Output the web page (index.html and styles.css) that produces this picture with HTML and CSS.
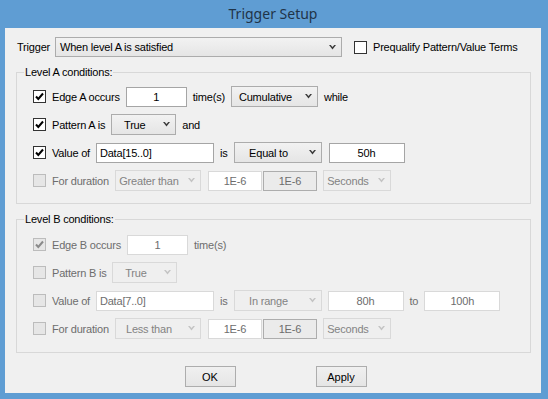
FILE: index.html
```html
<!DOCTYPE html>
<html>
<head>
  <meta charset="utf-8">
  <title>Trigger Setup</title>
  <link rel="stylesheet" href="styles.css">
</head>
<body>
  <div class="window">
    <div class="titlebar">Trigger Setup</div>
    <div class="dialog">
      <div class="top-row">
        <span class="trigger-lbl">Trigger</span>
        <div class="combo wide">
          <span class="combo-text">When level A is satisfied</span>
          <svg width="7" height="5" viewBox="0 0 7 5"><polygon points="0,0 1.8,0 3.5,2 5.2,0 7,0 3.5,4.5"/></svg>
        </div>
        <label class="opt prequal"><span class="box"></span>Prequalify Pattern/Value Terms</label>
      </div>

      <fieldset class="group">
        <legend>Level A conditions:</legend>
        <div class="group-body">
          <div class="row">
            <label class="opt"><span class="box"><svg width="11" height="11" viewBox="0 0 11 11"><polyline points="2,5.5 4.3,8 9,2.5"/></svg></span>Edge A occurs</label>
            <div class="field w-count">1</div>
            <span>time(s)</span>
            <div class="combo w-mode">
              <span class="combo-text">Cumulative</span>
              <svg width="7" height="5" viewBox="0 0 7 5"><polygon points="0,0 1.8,0 3.5,2 5.2,0 7,0 3.5,4.5"/></svg>
            </div>
            <span>while</span>
          </div>
          <div class="row">
            <label class="opt"><span class="box"><svg width="11" height="11" viewBox="0 0 11 11"><polyline points="2,5.5 4.3,8 9,2.5"/></svg></span>Pattern A is</label>
            <div class="combo w-bool">
              <span class="combo-text">True</span>
              <svg width="7" height="5" viewBox="0 0 7 5"><polygon points="0,0 1.8,0 3.5,2 5.2,0 7,0 3.5,4.5"/></svg>
            </div>
            <span>and</span>
          </div>
          <div class="row">
            <label class="opt"><span class="box"><svg width="11" height="11" viewBox="0 0 11 11"><polyline points="2,5.5 4.3,8 9,2.5"/></svg></span>Value of</label>
            <div class="field left w-data">Data[15..0]</div>
            <span>is</span>
            <div class="combo w-op">
              <span class="combo-text">Equal to</span>
              <svg width="7" height="5" viewBox="0 0 7 5"><polygon points="0,0 1.8,0 3.5,2 5.2,0 7,0 3.5,4.5"/></svg>
            </div>
            <div class="field w-val spaced">50h</div>
          </div>
          <div class="row off">
            <label class="opt"><span class="box"></span>For duration</label>
            <div class="combo w-cmp">
              <span class="combo-text">Greater than</span>
              <svg width="7" height="5" viewBox="0 0 7 5"><polygon points="0,0 1.8,0 3.5,2 5.2,0 7,0 3.5,4.5"/></svg>
            </div>
            <div class="field w-time spaced">1E-6</div>
            <div class="field readonly w-time joined">1E-6</div>
            <div class="combo w-unit">
              <span class="combo-text">Seconds</span>
              <svg width="7" height="5" viewBox="0 0 7 5"><polygon points="0,0 1.8,0 3.5,2 5.2,0 7,0 3.5,4.5"/></svg>
            </div>
          </div>
        </div>
      </fieldset>

      <fieldset class="group group-b">
        <legend>Level B conditions:</legend>
        <div class="group-body">
          <div class="row off">
            <label class="opt"><span class="box"><svg width="11" height="11" viewBox="0 0 11 11"><polyline points="2,5.5 4.3,8 9,2.5"/></svg></span>Edge B occurs</label>
            <div class="field w-count">1</div>
            <span>time(s)</span>
          </div>
          <div class="row off">
            <label class="opt"><span class="box"></span>Pattern B is</label>
            <div class="combo w-bool">
              <span class="combo-text">True</span>
              <svg width="7" height="5" viewBox="0 0 7 5"><polygon points="0,0 1.8,0 3.5,2 5.2,0 7,0 3.5,4.5"/></svg>
            </div>
          </div>
          <div class="row off">
            <label class="opt"><span class="box"></span>Value of</label>
            <div class="field left w-data">Data[7..0]</div>
            <span>is</span>
            <div class="combo w-op">
              <span class="combo-text">In range</span>
              <svg width="7" height="5" viewBox="0 0 7 5"><polygon points="0,0 1.8,0 3.5,2 5.2,0 7,0 3.5,4.5"/></svg>
            </div>
            <div class="field w-val">80h</div>
            <span>to</span>
            <div class="field w-val">100h</div>
          </div>
          <div class="row off">
            <label class="opt"><span class="box"></span>For duration</label>
            <div class="combo w-cmp">
              <span class="combo-text">Less than</span>
              <svg width="7" height="5" viewBox="0 0 7 5"><polygon points="0,0 1.8,0 3.5,2 5.2,0 7,0 3.5,4.5"/></svg>
            </div>
            <div class="field w-time spaced">1E-6</div>
            <div class="field readonly w-time joined">1E-6</div>
            <div class="combo w-unit">
              <span class="combo-text">Seconds</span>
              <svg width="7" height="5" viewBox="0 0 7 5"><polygon points="0,0 1.8,0 3.5,2 5.2,0 7,0 3.5,4.5"/></svg>
            </div>
          </div>
        </div>
      </fieldset>

      <div class="buttons">
        <button>OK</button>
        <button>Apply</button>
      </div>
    </div>
  </div>
</body>
</html>
```

FILE: styles.css
```css
* {
  box-sizing: border-box;
}
body {
  margin: 0;
  font-family: 'Liberation Sans', Arial, sans-serif;
  font-size: 11px;
  letter-spacing: -0.2px;
  color: #000;
  background: #5f9dd3;
}
.window {
  width: 548px;
  height: 399px;
  padding: 0 7px 6px 5px;
  display: flex;
  flex-direction: column;
}
.titlebar {
  height: 28px;
  line-height: 28px;
  text-align: center;
  font-family: 'Noto Sans', 'Open Sans', sans-serif;
  font-size: 14px;
  letter-spacing: 0;
  color: #1f3449;
}
.dialog {
  flex: 1;
  background: #f0f0f0;
  padding: 9px 10px 0 11px;
}
.top-row {
  display: flex;
  align-items: center;
  height: 20px;
  padding-left: 1px;
}
.trigger-lbl {
  width: 38px;
}
.prequal {
  margin-left: 12px;
  gap: 4px;
}

/* group boxes */
.group {
  margin: 9px 0 0;
  padding: 0;
  border: 1px solid #d8d8d8;
  min-width: 0;
}
.group legend {
  margin-left: 7px;
  padding: 0 1px;
  line-height: 13px;
}
.group-body {
  padding: 7px 0 12px 16px;
  display: flex;
  flex-direction: column;
  gap: 7px;
}
.group-b .group-body {
  padding-top: 8px;
  padding-bottom: 13px;
}
.row {
  display: flex;
  align-items: center;
  gap: 6px;
  height: 21px;
  white-space: nowrap;
}

/* checkbox + label */
.opt {
  display: flex;
  align-items: center;
  gap: 6px;
}
.box {
  width: 13px;
  height: 13px;
  border: 1px solid #333;
  background: #fff;
  display: flex;
  align-items: center;
  justify-content: center;
}
.box polyline {
  fill: none;
  stroke: #000;
  stroke-width: 2;
}

/* combo boxes */
.combo {
  display: flex;
  align-items: center;
  height: 21px;
  border: 1px solid #acacac;
  background: linear-gradient(#f2f2f2, #e5e5e5);
}
.combo-text {
  flex: 1;
  text-align: center;
  overflow: hidden;
}
.combo svg {
  margin: 0 5px 0 6px;
  fill: #3c3c3c;
}
.combo.wide {
  width: 287px;
  height: 20px;
}
.combo.wide .combo-text {
  text-align: left;
  padding-left: 4px;
}

/* text fields */
.field {
  height: 20px;
  border: 1px solid #a5a5a5;
  background: #fff;
  display: flex;
  align-items: center;
  justify-content: center;
}
.field.left {
  justify-content: flex-start;
  padding-left: 3px;
}
.field.readonly {
  background: #ebebeb;
  border-color: #adadad;
}
.spaced {
  margin-left: 1px;
}
.joined {
  margin-left: -5px;
}

.w-count { width: 61px; }
.w-mode { width: 87px; }
.w-bool { width: 65px; }
.w-data { width: 118px; }
.w-op { width: 88px; }
.w-val { width: 76px; }
.w-cmp { width: 86px; }
.w-time { width: 54px; }
.w-unit { width: 68px; }

/* disabled rows */
.off {
  color: #6d6d6d;
}
.off .box {
  border-color: #bcbcbc;
  background: #e6e6e6;
}
.off .box polyline {
  stroke: #8a8a8a;
}
.off .combo {
  background: #efefef;
  border-color: #d9d9d9;
  color: #838383;
}
.off .combo svg {
  fill: #c4c4c4;
}
.off .field {
  border-color: #d9d9d9;
}
.off .field.readonly {
  border-color: #adadad;
}

.buttons {
  display: flex;
  justify-content: center;
  gap: 80px;
  margin-top: 13px;
  padding-left: 4px;
}
button {
  width: 51px;
  height: 21px;
  padding: 0;
  border: 1px solid #adadad;
  background: linear-gradient(#f0f0f0, #e5e5e5);
  font: inherit;
  color: #000;
}
```
